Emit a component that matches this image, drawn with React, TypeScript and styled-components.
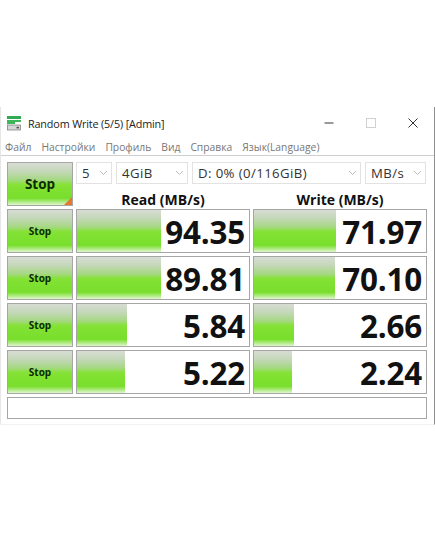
import React from 'react';
import styled, { createGlobalStyle } from 'styled-components';

const GlobalStyle = createGlobalStyle`
  html, body {
    margin: 0;
    padding: 0;
    background: #fff;
  }
  body {
    font-family: "Open Sans", "Noto Sans", sans-serif;
    color: #111;
  }
`;

const barGradient = `linear-gradient(
  to bottom,
  #d8dcd4 0%,
  #c4d8b8 20%,
  #a6d884 40%,
  #84e234 52%,
  #78de2c 84%,
  #e0f6ce 100%
)`;

const Page = styled.div`
  width: 435px;
  height: 537px;
  padding-top: 107px;
  box-sizing: border-box;
  overflow: hidden;
`;

const Window = styled.div`
  width: 435px;
  height: 318px;
  box-sizing: border-box;
  border-left: 1px solid #e6e6e6;
  border-right: 1px solid #909090;
  border-bottom: 1px solid #f2f2f2;
`;

const TitleBar = styled.div`
  display: flex;
  align-items: center;
  height: 32px;
  padding-left: 5px;
`;

const Title = styled.div`
  flex: 1;
  margin-left: 6px;
  font-size: 10.8px;
  letter-spacing: -0.15px;
  color: #222;
`;

const WindowButton = styled.div`
  width: 42px;
  display: flex;
  justify-content: center;
  align-items: center;
`;

const MenuBar = styled.div`
  display: flex;
  gap: 10px;
  height: 16px;
  padding-left: 4px;
  align-items: center;
  font-size: 10.3px;
  color: #777;
  border-bottom: 1px solid #cfcfcf;
`;

const Content = styled.div`
  display: grid;
  grid-template-columns: 66px 174px 174px;
  grid-auto-rows: 44px;
  column-gap: 3px;
  row-gap: 3px;
  padding: 6px 0 0 6px;
`;

const Button = styled.div<{ $big?: boolean }>`
  position: relative;
  box-sizing: border-box;
  display: flex;
  align-items: center;
  justify-content: center;
  border: 1px solid #a6a6a6;
  font-weight: 700;
  font-size: ${(p) => (p.$big ? '13.5px' : '10px')};
  color: #0d2a06;
  background: ${barGradient};
`;

const Corner = styled.div`
  position: absolute;
  right: 0;
  bottom: 0;
  width: 0;
  height: 0;
  border-left: 8px solid transparent;
  border-bottom: 8px solid #e8762c;
`;

const TopStack = styled.div`
  grid-column: 2 / 4;
  display: flex;
  flex-direction: column;
`;

const Selects = styled.div`
  display: flex;
  gap: 4px;
  height: 22px;
`;

const Select = styled.div<{ $width: number }>`
  width: ${(p) => p.$width}px;
  box-sizing: border-box;
  display: flex;
  align-items: center;
  justify-content: space-between;
  padding: 0 3px 0 5px;
  border: 1px solid #e2e2e2;
  font-size: 13.2px;
  color: #333;
  letter-spacing: 0.4px;
`;

const Headers = styled.div`
  display: grid;
  grid-template-columns: 174px 174px;
  column-gap: 3px;
  margin-top: 10px;
`;

const Header = styled.div`
  text-align: center;
  font-weight: 700;
  font-size: 14px;
  line-height: 12px;
  color: #111;
`;

const Cell = styled.div`
  position: relative;
  box-sizing: border-box;
  display: flex;
  align-items: center;
  justify-content: flex-end;
  padding-right: 4px;
  border: 1px solid #a6a6a6;
  background: #fff;
`;

const Bar = styled.div`
  position: absolute;
  left: 0;
  top: 0;
  bottom: 0;
  background: ${barGradient};
`;

const Value = styled.div`
  position: relative;
  font-weight: 700;
  font-size: 31.4px;
  letter-spacing: -0.2px;
  color: #111;
`;

const Status = styled.div`
  grid-column: 1 / 4;
  height: 22px;
  box-sizing: border-box;
  border: 1px solid #a6a6a6;
  background: #fff;
`;

const Chevron: React.FC = () => (
  <svg width="9" height="6" viewBox="0 0 9 6">
    <path d="M1 1l3.5 3.5L8 1" fill="none" stroke="#bdbdbd" strokeWidth="1" />
  </svg>
);

const AppIcon: React.FC = () => (
  <svg width="16" height="16" viewBox="0 0 16 16">
    <path d="M1 1h14v3H1z" fill="#35a852" />
    <path d="M1 5h14v2H9v2H1z" fill="#3cb85a" />
    <rect x="1.5" y="10" width="13" height="5" fill="#d4d6d4" stroke="#777" strokeWidth="0.7" />
    <rect x="10.5" y="11.8" width="2.5" height="1.6" fill="#555" />
  </svg>
);

const menuItems = ['Файл', 'Настройки', 'Профиль', 'Вид', 'Справка', 'Язык(Language)'];

const rows = [
  { read: '94.35', readWidth: 84, write: '71.97', writeWidth: 82 },
  { read: '89.81', readWidth: 84, write: '70.10', writeWidth: 81 },
  { read: '5.84', readWidth: 50, write: '2.66', writeWidth: 40 },
  { read: '5.22', readWidth: 48, write: '2.24', writeWidth: 38 },
];

const App: React.FC = () => {
  return (
    <Page>
      <GlobalStyle />
      <Window>
        <TitleBar>
          <AppIcon />
          <Title>Random Write (5/5) [Admin]</Title>
          <WindowButton>
            <svg width="10" height="10" viewBox="0 0 10 10">
              <path d="M0.5 5h9" stroke="#555" strokeWidth="1.2" />
            </svg>
          </WindowButton>
          <WindowButton>
            <svg width="10" height="10" viewBox="0 0 10 10">
              <rect x="0.5" y="0.5" width="9" height="9" fill="none" stroke="#d0d0d0" />
            </svg>
          </WindowButton>
          <WindowButton>
            <svg width="10" height="10" viewBox="0 0 10 10">
              <path d="M0.5 0.5l9 9M9.5 0.5l-9 9" stroke="#333" strokeWidth="1" />
            </svg>
          </WindowButton>
        </TitleBar>
        <MenuBar>
          {menuItems.map((item) => (
            <span key={item}>{item}</span>
          ))}
        </MenuBar>
        <Content>
          <Button $big>
            Stop
            <Corner />
          </Button>
          <TopStack>
            <Selects>
              <Select $width={36}>5<Chevron /></Select>
              <Select $width={72}>4GiB<Chevron /></Select>
              <Select $width={169}>D: 0% (0/116GiB)<Chevron /></Select>
              <Select $width={61}>MB/s<Chevron /></Select>
            </Selects>
            <Headers>
              <Header>Read (MB/s)</Header>
              <Header>Write (MB/s)</Header>
            </Headers>
          </TopStack>
          {rows.map((row) => (
            <React.Fragment key={row.read}>
              <Button>Stop</Button>
              <Cell>
                <Bar style={{ width: row.readWidth }} />
                <Value>{row.read}</Value>
              </Cell>
              <Cell>
                <Bar style={{ width: row.writeWidth }} />
                <Value>{row.write}</Value>
              </Cell>
            </React.Fragment>
          ))}
          <Status />
        </Content>
      </Window>
    </Page>
  );
};

export default App;
